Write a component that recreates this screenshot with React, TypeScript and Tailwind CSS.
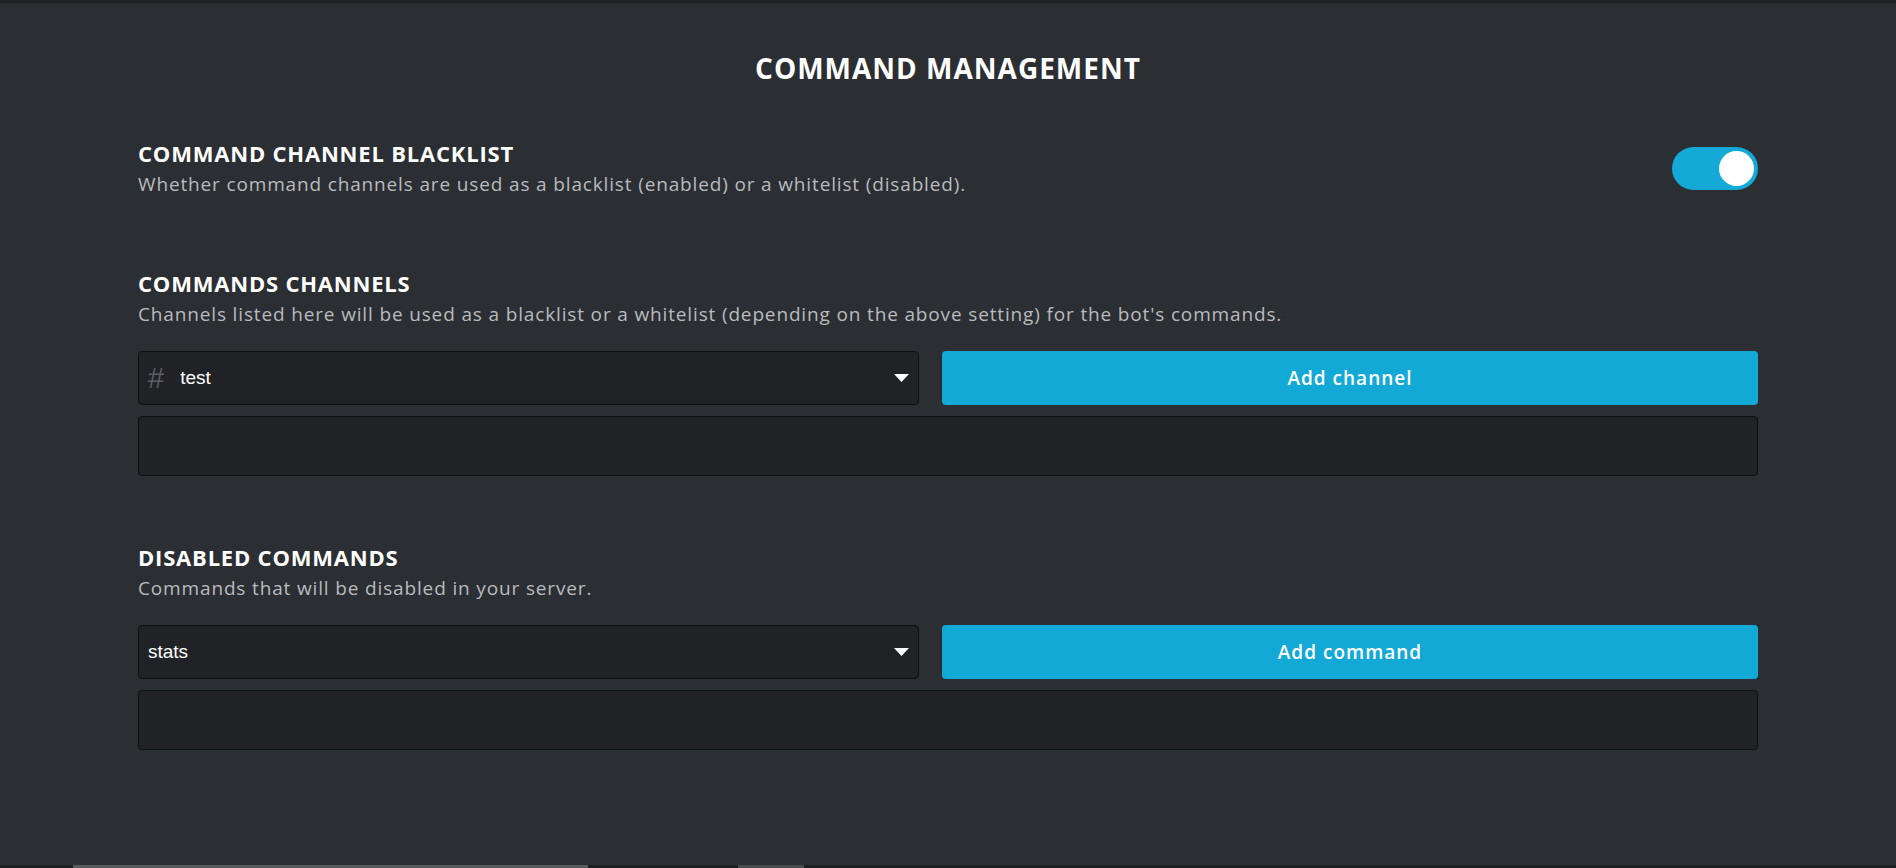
import { useState } from "react";

const body = { fontFamily: '"Open Sans", "Noto Sans", sans-serif' };

function Toggle({ on, onChange }: { on: boolean; onChange: (v: boolean) => void }) {
  return (
    <button
      onClick={() => onChange(!on)}
      className={`flex h-[43px] w-[86px] shrink-0 items-center rounded-full p-[4px] ${
        on ? "justify-end bg-[#14a9d6]" : "justify-start bg-[#4a4d52]"
      }`}
    >
      <span className="block h-[35px] w-[35px] rounded-full bg-white" />
    </button>
  );
}

function SectionHead({ title, desc }: { title: string; desc: string }) {
  return (
    <div>
      <h2 className="text-[22px] font-bold leading-[28px] tracking-[0.8px] text-white">{title}</h2>
      <p className="mt-[4px] text-[19px] leading-[26px] tracking-[0.85px] text-[#b9bbbe]">{desc}</p>
    </div>
  );
}

function Caret() {
  return (
    <svg width="15" height="8" viewBox="0 0 15 8" className="shrink-0">
      <path d="M0 0 L15 0 L7.5 8 Z" fill="#ffffff" />
    </svg>
  );
}

function PickerRow({
  value,
  hash,
  label,
  listTop,
}: {
  value: string;
  hash?: boolean;
  label: string;
  listTop: string;
}) {
  return (
    <div className={listTop}>
      <div className="flex gap-[23px]">
        <div className="flex h-[54px] w-[781px] items-center rounded-[4px] border border-[#0e0f11] bg-[#202226] pl-[9px] pr-[9px]">
          {hash && (
            <span
              className="mr-[16px] text-[29px] leading-none text-[#5a5d62]"
              style={{ fontFamily: '"Liberation Sans", sans-serif' }}
            >
              #
            </span>
          )}
          <span
            className="flex-1 text-[19px] text-white"
            style={{ fontFamily: '"Liberation Sans", sans-serif' }}
          >
            {value}
          </span>
          <Caret />
        </div>
        <button className="flex h-[54px] flex-1 items-center justify-center rounded-[4px] bg-[#13a9d6] text-[19px] font-semibold tracking-[1px] text-white">
          {label}
        </button>
      </div>
      <div className="mt-[11px] h-[60px] rounded-[4px] border border-[#0e0f11] bg-[#202226]" />
    </div>
  );
}

export default function App() {
  const [blacklist, setBlacklist] = useState(true);

  return (
    <div className="flex h-[868px] w-full flex-col overflow-hidden bg-[#2b2e32]" style={body}>
      <div className="h-[3px] bg-[#202225]" />
      <main className="flex-1 px-[138px] pt-[47px]">
        <h1 className="text-center text-[28px] font-bold leading-[36px] tracking-[1px] text-white">
          COMMAND MANAGEMENT
        </h1>

        <div className="mt-[53px] flex items-center justify-between">
          <SectionHead
            title="COMMAND CHANNEL BLACKLIST"
            desc="Whether command channels are used as a blacklist (enabled) or a whitelist (disabled)."
          />
          <Toggle on={blacklist} onChange={setBlacklist} />
        </div>

        <div className="mt-[72px]">
          <SectionHead
            title="COMMANDS CHANNELS"
            desc="Channels listed here will be used as a blacklist or a whitelist (depending on the above setting) for the bot's commands."
          />
          <PickerRow value="test" hash label="Add channel" listTop="mt-[24px]" />
        </div>

        <div className="mt-[67px]">
          <SectionHead
            title="DISABLED COMMANDS"
            desc="Commands that will be disabled in your server."
          />
          <PickerRow value="stats" label="Add command" listTop="mt-[24px]" />
        </div>
      </main>
      <div className="flex h-[3px] bg-[#1e1f22]">
        <div className="ml-[73px] w-[515px] bg-[#5a5b5e]" />
        <div className="ml-[150px] w-[66px] bg-[#4a4b4e]" />
      </div>
    </div>
  );
}
